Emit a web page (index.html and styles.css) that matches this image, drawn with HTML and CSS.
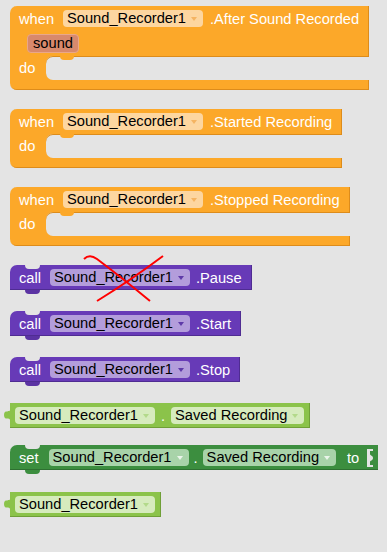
FILE: index.html
```html
<!DOCTYPE html>
<html lang="en">
<head>
    <meta charset="UTF-8">
    <meta name="viewport" content="width=device-width, initial-scale=1.0">
    <title>Sound Recorder blocks</title>
    <link rel="stylesheet" href="styles.css">
</head>
<body>
    <div class="canvas">
        <!-- event blocks -->
        <div class="event">
            <div class="head">
                <span class="kw">when</span>
                <span class="chip chip-orange">Sound_Recorder1<i class="arrow"></i></span>
                <span class="label">.After Sound Recorded</span>
            </div>
            <div class="params"><span class="param">sound</span></div>
            <div class="do-row"><span class="kw">do</span><div class="slot"></div></div>
            <div class="foot"></div>
        </div>

        <div class="event">
            <div class="head">
                <span class="kw">when</span>
                <span class="chip chip-orange">Sound_Recorder1<i class="arrow"></i></span>
                <span class="label">.Started Recording</span>
            </div>
            <div class="do-row"><span class="kw">do</span><div class="slot"></div></div>
            <div class="foot"></div>
        </div>

        <div class="event">
            <div class="head">
                <span class="kw">when</span>
                <span class="chip chip-orange">Sound_Recorder1<i class="arrow"></i></span>
                <span class="label">.Stopped Recording</span>
            </div>
            <div class="do-row"><span class="kw">do</span><div class="slot"></div></div>
            <div class="foot"></div>
        </div>

        <!-- method calls -->
        <div class="stmt call crossed">
            <span class="kw">call</span>
            <span class="chip chip-purple">Sound_Recorder1<i class="arrow"></i></span>
            <span class="label">.Pause</span>
            <svg class="cross" width="100" height="52" viewBox="0 0 100 52">
                <path d="M1 4 C5 0 10 1 14 4 C30 16 50 32 67 46" />
                <path d="M80 1 C60 16 40 30 14 46" />
            </svg>
        </div>
        <div class="stmt call">
            <span class="kw">call</span>
            <span class="chip chip-purple">Sound_Recorder1<i class="arrow"></i></span>
            <span class="label">.Start</span>
        </div>
        <div class="stmt call">
            <span class="kw">call</span>
            <span class="chip chip-purple">Sound_Recorder1<i class="arrow"></i></span>
            <span class="label">.Stop</span>
        </div>

        <!-- property getter / setter -->
        <div class="value getter">
            <svg class="tab" width="6" height="16" viewBox="0 0 6 16"><path d="M6 0 V3 C6 6 0 2 0 8 C0 14 6 10 6 13 V16 Z" /></svg>
            <span class="chip chip-lime">Sound_Recorder1<i class="arrow"></i></span>
            <span class="dot">.</span>
            <span class="chip chip-lime">Saved Recording<i class="arrow"></i></span>
        </div>

        <div class="stmt setter">
            <span class="kw">set</span>
            <span class="chip chip-green">Sound_Recorder1<i class="arrow"></i></span>
            <span class="dot">.</span>
            <span class="chip chip-green">Saved Recording<i class="arrow"></i></span>
            <span class="kw kw-to">to</span>
            <svg class="socket" width="6" height="18" viewBox="0 0 6 18"><path d="M0 0 H6 V2 H3 V5 C3 7 6 6 6 9 C6 12 3 11 3 13 V16 H6 V18 H0 Z" /></svg>
        </div>

        <div class="value getter">
            <svg class="tab" width="6" height="16" viewBox="0 0 6 16"><path d="M6 0 V3 C6 6 0 2 0 8 C0 14 6 10 6 13 V16 Z" /></svg>
            <span class="chip chip-lime">Sound_Recorder1<i class="arrow"></i></span>
        </div>
    </div>
</body>
</html>
```

FILE: styles.css
```css
body {
    margin: 0;
    background-color: #e4e4e4;
    font-family: 'Liberation Sans', Arial, sans-serif;
    font-size: 11pt;
    color: #fff;
}

.canvas {
    display: flex;
    flex-direction: column;
    align-items: flex-start;
    padding: 6px 0 0 10px;
    height: 552px;
    box-sizing: border-box;
    overflow: hidden;
}

.kw, .label, .dot {
    white-space: nowrap;
}

/* dropdown field */
.chip {
    display: inline-flex;
    align-items: center;
    height: 17px;
    padding: 0 6px 0 4px;
    border-radius: 4px;
    color: #000;
    white-space: nowrap;
    line-height: 17px;
}

.arrow {
    display: inline-block;
    margin-left: 5px;
    width: 0;
    height: 0;
    border-left: 3.5px solid transparent;
    border-right: 3.5px solid transparent;
    border-top: 4px solid currentColor;
}

.chip-orange { background-color: #fdd6a0; }
.chip-orange .arrow { border-top-color: #f5b462; }
.chip-purple { background-color: #b39ddb; }
.chip-purple .arrow { border-top-color: #5e3aa8; }
.chip-lime { background-color: #d6ebbd; }
.chip-lime .arrow { border-top-color: #b3d98a; }
.chip-green { background-color: #a8d3a9; }
.chip-green .arrow { border-top-color: #eaf5ea; }

/* event blocks */
.event {
    display: flex;
    flex-direction: column;
    margin-bottom: 19px;
}

.head {
    display: flex;
    align-items: center;
    height: 25px;
    padding: 0 10px 0 9px;
    background-color: #fca829;
    border-top-left-radius: 7px;
    box-shadow: inset -1px 0 0 #dd8c1b;
}

.head .chip {
    margin: 0 7px 0 9px;
}

.params {
    display: flex;
    align-items: center;
    height: 25px;
    padding-left: 17px;
    background-color: #fca829;
    box-shadow: inset -1px 0 0 #dd8c1b;
}

.param {
    height: 17px;
    line-height: 17px;
    padding: 0 5px;
    border-radius: 4px;
    background-color: #d8896c;
    border: 1px solid #e9a78a;
    color: #000;
}

.do-row {
    display: flex;
    height: 24px;
    background-color: #fca829;
}

.do-row .kw {
    width: 27px;
    padding-left: 9px;
    line-height: 24px;
}

.slot {
    position: relative;
    flex: 1;
    background-color: #e4e4e4;
    border-radius: 7px 0 0 7px;
    box-shadow: inset 0 1px 0 #dd8c1b;
}

.slot::before {
    content: "";
    position: absolute;
    left: 14px;
    top: 0;
    width: 14px;
    height: 4px;
    background-color: #fca829;
    border-radius: 0 0 6px 6px;
}

.foot {
    height: 10px;
    background-color: #fca829;
    border-bottom-left-radius: 7px;
    box-shadow: inset -1px -1px 0 #dd8c1b;
}

/* statement blocks */
.stmt {
    position: relative;
    display: flex;
    align-items: center;
    height: 25px;
    padding: 0 10px 0 9px;
    border-top-left-radius: 7px;
    margin-bottom: 21px;
}

.stmt::before {
    content: "";
    position: absolute;
    left: 15px;
    top: 0;
    width: 15px;
    height: 4px;
    background-color: #e4e4e4;
    border-radius: 0 0 6px 6px;
}

.stmt::after {
    content: "";
    position: absolute;
    left: 15px;
    bottom: -4px;
    width: 15px;
    height: 4px;
    border-radius: 0 0 6px 6px;
}

.call {
    background-color: #673ab7;
    box-shadow: inset -1px -1px 0 #4f2c92;
}

.call::after { background-color: #5b33a3; }

.call .chip {
    margin: 0 6px 0 9px;
}

.crossed .cross {
    position: absolute;
    left: 73px;
    top: -10px;
    fill: none;
    stroke: #f00;
    stroke-width: 2;
}

/* value blocks */
.value {
    position: relative;
    display: flex;
    align-items: center;
    height: 25px;
    padding: 0 6px 0 5px;
    background-color: #8bc34a;
    box-shadow: inset -1px -1px 0 #6f9f37;
    margin-bottom: 17px;
}

.tab {
    position: absolute;
    left: -6px;
    top: 4px;
    fill: #8bc34a;
}

.dot {
    margin: 0 6px;
    color: #fff;
}

.setter {
    background-color: #3c8e3f;
    box-shadow: inset 0 -1px 0 #2e7031;
    padding-right: 5px;
    margin-bottom: 22px;
}

.setter::after { background-color: #3c8e3f; }

.setter .kw:first-child {
    margin-right: 10px;
}

.setter .dot {
    margin: 0 5px;
}

.kw-to {
    margin: 0 8px 0 11px;
}

.socket {
    fill: #e4e4e4;
}
```
